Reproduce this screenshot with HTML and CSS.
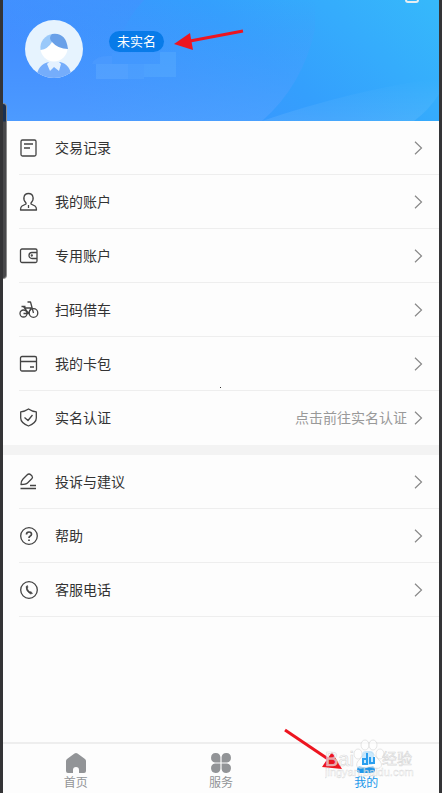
FILE: index.html
```html
<!DOCTYPE html>
<html lang="zh-CN">
<head>
<meta charset="utf-8">
<meta name="viewport" content="width=device-width, initial-scale=1">
<title>我的</title>
<link rel="stylesheet" href="styles.css">
</head>
<body>
<div class="app">
  <header class="profile">
    <svg class="profile-bg" viewBox="0 0 436 121" preserveAspectRatio="none" aria-hidden="true">
      <defs>
        <linearGradient id="sky" x1="0" y1="0.3" x2="1" y2="0"><stop offset="0" stop-color="#408dff"/><stop offset="0.5" stop-color="#349ffd"/><stop offset="1" stop-color="#36b9fb"/></linearGradient>
        <linearGradient id="glow" x1="0" y1="0" x2="0" y2="1"><stop offset="0" stop-color="#fff" stop-opacity="0"/><stop offset="1" stop-color="#fff" stop-opacity="0.09"/></linearGradient>
        <linearGradient id="disc" x1="0" y1="0" x2="0" y2="1"><stop offset="0" stop-color="#4b93ff" stop-opacity="0"/><stop offset="1" stop-color="#55a4ff" stop-opacity="0.6"/></linearGradient>
        <linearGradient id="shade" x1="0" y1="0" x2="0" y2="1"><stop offset="0" stop-color="#4590ff" stop-opacity="0.5"/><stop offset="0.4" stop-color="#4590ff" stop-opacity="0"/></linearGradient>
      </defs>
      <rect width="436" height="121" fill="url(#sky)"/>
      <path d="M0 0H312V29Q300 85 259 121H0Z" fill="url(#disc)"/>
      <path d="M0 0H141Q125 17 119 35Q90 90 70 121H0Z" fill="url(#shade)"/>
      <path d="M259 121Q350 90 436 78V94Q426 110 411 121Z" fill="url(#glow)"/>
    </svg>
    <svg class="avatar" viewBox="0 0 58 58" role="img" aria-label="头像">
      <defs><clipPath id="round"><circle cx="29" cy="29" r="29"/></clipPath></defs>
      <circle cx="29" cy="29" r="29" fill="#e6f3fe"/>
      <g clip-path="url(#round)">
        <path d="M11 60Q12 44 24 42H35Q46 44 47 60Z" fill="#75adfb"/>
        <path d="M24 42L22 44L25 51L29 47L34 51L36 44L34 42Z" fill="#e4f1ff"/>
        <ellipse cx="29" cy="28" rx="13.500" ry="13.500" fill="#fff"/>
        <path d="M28 14A14 14 0 0 0 15.500 30Q23 29 27 22Z" fill="#9ac9fa"/>
        <path d="M27 14Q41 12 43 29Q33 29 27 22Q23 18 27 14Z" fill="#69a0e8"/>
      </g>
    </svg>
    <div class="identity">
      <a class="badge" href="#verify">未实名</a>
      <svg class="masked" viewBox="0 0 84 28" aria-hidden="true">
        <path d="M0 12Q3 4 16 4H20V12Z" fill="#5ba3ff" opacity=".3"/>
        <path d="M4 12H36V27H4Z" fill="#67b0ff" opacity=".4"/>
        <path d="M36 12H52V27H36Z" fill="#57a8ff" opacity=".4"/>
        <path d="M20 1H68V12H20Z" fill="#459cff" opacity=".4"/>
        <path d="M68 0H84V12H68ZM52 12H84V25H52Z" fill="#5db0ff" opacity=".4"/>
      </svg>
    </div>
    <svg class="arrow-top" viewBox="0 0 72 24" aria-hidden="true"><path d="M70 3L17 13" stroke="#ed1520" stroke-width="3"/><path d="M1 16L17 5L20 22Z" fill="#ed1520"/></svg>
    <svg class="top-action" viewBox="0 0 14 4" aria-hidden="true"><path d="M1 0Q1 2 3 2H11Q13 2 13 0" fill="none" stroke="#e7eef2" stroke-width="2"/></svg>
    <i class="handle"></i>
  </header>

  <main>
    <nav class="menu" aria-label="账户">
      <a class="row" href="#records"><svg class="icon" viewBox="0 0 20 20"><rect x="2" y="2" width="15" height="16" rx="1.5"/><path d="M5 6H14M5 10H11"/></svg><span class="label">交易记录</span><svg class="chevron" viewBox="0 0 9 14"><path d="M1 .7L7.5 7L1 13.3"/></svg></a>
      <a class="row" href="#account"><svg class="icon" viewBox="0 0 20 20"><path d="M7 11C5 9 4.500 7 5 5C5.500 2.500 7 1.500 9.500 1.500S13.500 2.500 14 5C14.500 7 14 9 12 11V12L16 14Q17.500 15 17.500 18H1.500Q1.500 15 3 14L7 12ZM9.500 13V16"/></svg><span class="label">我的账户</span><svg class="chevron" viewBox="0 0 9 14"><path d="M1 .7L7.5 7L1 13.3"/></svg></a>
      <a class="row" href="#special"><svg class="icon" viewBox="0 0 20 20"><rect x="1.500" y="3" width="16.500" height="13.500" rx="1.500"/><path d="M18 6.500H13A3 3 0 0 0 13 12.500H18"/><circle cx="12.800" cy="9.500" r=".5"/></svg><span class="label">专用账户</span><svg class="chevron" viewBox="0 0 9 14"><path d="M1 .7L7.5 7L1 13.3"/></svg></a>
      <a class="row" href="#bike"><svg class="icon" viewBox="0 0 20 20"><circle cx="4.500" cy="13.500" r="3.500"/><circle cx="14.500" cy="13" r="4.300"/><path d="M2.500 6.500H6.500M4.500 6.500L9.500 13.500H4.500M5.500 8H12L9.500 13.500M14.500 13L11.500 2H8.500"/></svg><span class="label">扫码借车</span><svg class="chevron" viewBox="0 0 9 14"><path d="M1 .7L7.5 7L1 13.3"/></svg></a>
      <a class="row" href="#cards"><svg class="icon" viewBox="0 0 20 20"><rect x="1.500" y="2.500" width="16" height="14.500" rx="1.500"/><path d="M1.500 7.500H17.500M11 13H15"/></svg><span class="label">我的卡包</span><svg class="chevron" viewBox="0 0 9 14"><path d="M1 .7L7.5 7L1 13.3"/></svg></a>
      <a class="row" id="verify" href="#verify"><svg class="icon" viewBox="0 0 20 20"><path d="M9.500 1Q13 3.500 17.300 3.800V10Q17.300 15 9.500 18Q1.700 15 1.700 10V3.800Q6 3.500 9.500 1ZM5.500 9.500L9 12.500L13.500 7"/></svg><span class="label">实名认证</span><span class="hint">点击前往实名认证</span><svg class="chevron" viewBox="0 0 9 14"><path d="M1 .7L7.5 7L1 13.3"/></svg></a>
    </nav>
    <nav class="menu support" aria-label="支持">
      <a class="row" href="#feedback"><svg class="icon" viewBox="0 0 20 20"><path d="M2 12.500Q2 9 4 7L8 3Q10 1 12 3L13 4Q14 5.500 13 6.500L8.500 11Q7 12.500 2 12.500ZM1.500 16.500H17M11 13.500H17"/></svg><span class="label">投诉与建议</span><svg class="chevron" viewBox="0 0 9 14"><path d="M1 .7L7.5 7L1 13.3"/></svg></a>
      <a class="row" href="#help"><svg class="icon" viewBox="0 0 20 20"><circle cx="10" cy="10" r="8.300"/><path d="M7.500 8.500Q7.500 6 10 6T12.500 8.200Q12.500 9.500 11 10.200Q10 10.800 10 12" stroke-width="1.700"/><path d="M10 13.500V15" stroke-width="1.700"/></svg><span class="label">帮助</span><svg class="chevron" viewBox="0 0 9 14"><path d="M1 .7L7.5 7L1 13.3"/></svg></a>
      <a class="row" href="#phone"><svg class="icon" viewBox="0 0 20 20"><circle cx="10" cy="10" r="8.300"/><path d="M8.500 5.500L7 6.500Q6.500 11 11.500 14L13.500 13.500L12 11.500L11 12Q8.500 10 8.300 8L9 7.500Z" fill="#444" stroke-width=".5"/></svg><span class="label">客服电话</span><svg class="chevron" viewBox="0 0 9 14"><path d="M1 .7L7.5 7L1 13.3"/></svg></a>
    </nav>
  </main>

  <nav class="tabs" aria-label="主导航">
    <a class="tab" href="#home"><svg viewBox="0 0 22 22"><path d="M9.500 1.500Q11 .5 12.500 1.500L20 7Q21 8 21 9V19Q21 21 19 21H14V18Q14 15 11 15T8 18V21H3Q1 21 1 19V9Q1 8 2 7Z"/></svg><span>首页</span></a>
    <a class="tab" href="#services"><svg viewBox="0 0 22 22"><path d="M10.400 10.400H5A4.700 4.700 0 1 1 10.400 5ZM11.600 10.400V5A4.700 4.700 0 1 1 17 10.400ZM10.400 11.600V17A4.700 4.700 0 1 1 5 11.600ZM11.600 11.600H17A4.700 4.700 0 1 1 11.600 17Z"/></svg><span>服务</span></a>
    <a class="tab active" href="#me" aria-current="page"><svg viewBox="0 0 22 22"><path d="M4 14Q8 15 11 16Q14 15 18 14Q20 15 20 18Q20 21 17 21H5Q2 21 2 18Q2 15 4 14Z"/></svg><span>我的</span></a>
    <svg class="arrow-bottom" viewBox="0 0 60 42" aria-hidden="true"><path d="M2 3L48 34" stroke="#ed1520" stroke-width="3"/><path d="M59 42L49 25L39 40Z" fill="#ed1520"/></svg>
    <svg class="watermark" viewBox="0 0 92 46" aria-hidden="true">
      <g class="paw"><ellipse cx="33" cy="17" rx="4" ry="5"/><ellipse cx="40" cy="8" rx="4" ry="5"/><ellipse cx="48" cy="8" rx="4" ry="5"/><ellipse cx="55" cy="17" rx="4" ry="5"/><path d="M44 15C38 15 38 20 34 23C29 28 33 33 38 31Q44 29 49 31C56 33 59 28 54 23C50 20 49 15 44 15Z"/></g>
      <rect x="37" y="14" width="12" height="14" rx="4" fill="#a5dbfb" stroke="none"/>
      <path d="M42 16V27H38V22H42M45 20V26H49V20" fill="none" stroke="#2b9fef" stroke-width="2" stroke-opacity="1"/>
      <text class="mark-name" x="0" y="29">Bai</text><text class="mark-cn" x="57" y="27">经验</text>
      <text class="mark-url" x="0" y="39">jingyan.baidu.com</text>
    </svg>
  </nav>
  <i class="speck"></i>
</div>
</body>
</html>
```
FILE: styles.css
```css
* { box-sizing: border-box; }
body {
  margin: 0;
  background: #fdfdfd;
  font-family: "Liberation Sans", "Noto Sans CJK SC", sans-serif;
  font-size: 14px;
  line-height: 20px;
  color: #333;
}
a { color: inherit; text-decoration: none; }
.app {
  position: relative;
  display: flex;
  flex-direction: column;
  min-height: 100vh;
  border: solid #343436;
  border-width: 0 3px;
}
main { flex: 1; }

.profile {
  position: relative;
  display: flex;
  gap: 26px;
  padding: 20px 22px 43px;
}
.profile-bg { position: absolute; inset: 0; width: 100%; height: 100%; }
.avatar { position: relative; width: 58px; height: 58px; }
.identity {
  position: relative;
  display: flex;
  flex-direction: column;
  align-items: flex-start;
  height: 58px;
  padding-top: 11px;
}
.badge {
  flex: none;
  padding: 0 8px;
  border-radius: 11px;
  background: #087be9;
  color: #fff;
  font-size: 13px;
  line-height: 21px;
}
.masked { position: absolute; left: -17px; top: 32px; width: 84px; height: 28px; }
.arrow-top { position: absolute; left: 170px; top: 28px; width: 72px; height: 24px; }
.top-action { position: absolute; right: 20px; top: 0; width: 14px; height: 4px; }
.handle {
  position: absolute;
  z-index: 1;
  left: 0;
  top: 103px;
  width: 4px;
  height: 176px;
  border: solid #8c8c8c;
  border-width: 1px 1px 1px 0;
  border-radius: 0 4px 4px 0;
  background: linear-gradient(#183052 17px, #48484a 18px);
}

.row {
  display: flex;
  align-items: center;
  height: 54px;
  margin-left: 16px;
  padding-right: 16px;
  border-bottom: 1px solid #eee;
}
.icon {
  width: 20px;
  height: 20px;
  margin-right: 16px;
  fill: none;
  stroke: #444;
  stroke-width: 1.3;
  stroke-linejoin: round;
}
.label { flex: 1; }
.hint { margin-right: 7px; color: #999; }
.chevron { width: 9px; height: 14px; fill: none; stroke: #888; stroke-width: 1.2; }
#verify { border-bottom-color: transparent; }
.support { border-top: 10px solid #f3f3f3; }

.tabs {
  position: relative;
  display: flex;
  height: 51px;
  border-top: 2px solid #eee;
}
.tab {
  flex: 1;
  display: flex;
  flex-direction: column;
  align-items: center;
  padding-top: 8px;
  color: #929497;
  font-size: 12px;
}
.tab svg { width: 22px; height: 22px; fill: currentColor; }
.tab span { line-height: 18px; }
.tab.active { color: #2097ea; }
.arrow-bottom { position: absolute; right: 96px; top: -17px; width: 60px; height: 42px; }
.watermark {
  position: absolute;
  right: 22px;
  top: -7px;
  width: 92px;
  height: 46px;
  fill: #fff;
  fill-opacity: .6;
  stroke: #ccc;
  stroke-opacity: .7;
  stroke-width: .7;
}
.mark-name { font-size: 20px; }
.mark-cn { font-size: 15px; }
.mark-url { font-size: 11px; stroke-width: .4; }
.speck { position: absolute; left: 217px; top: 387px; width: 1px; height: 1px; background: #333; }
```
